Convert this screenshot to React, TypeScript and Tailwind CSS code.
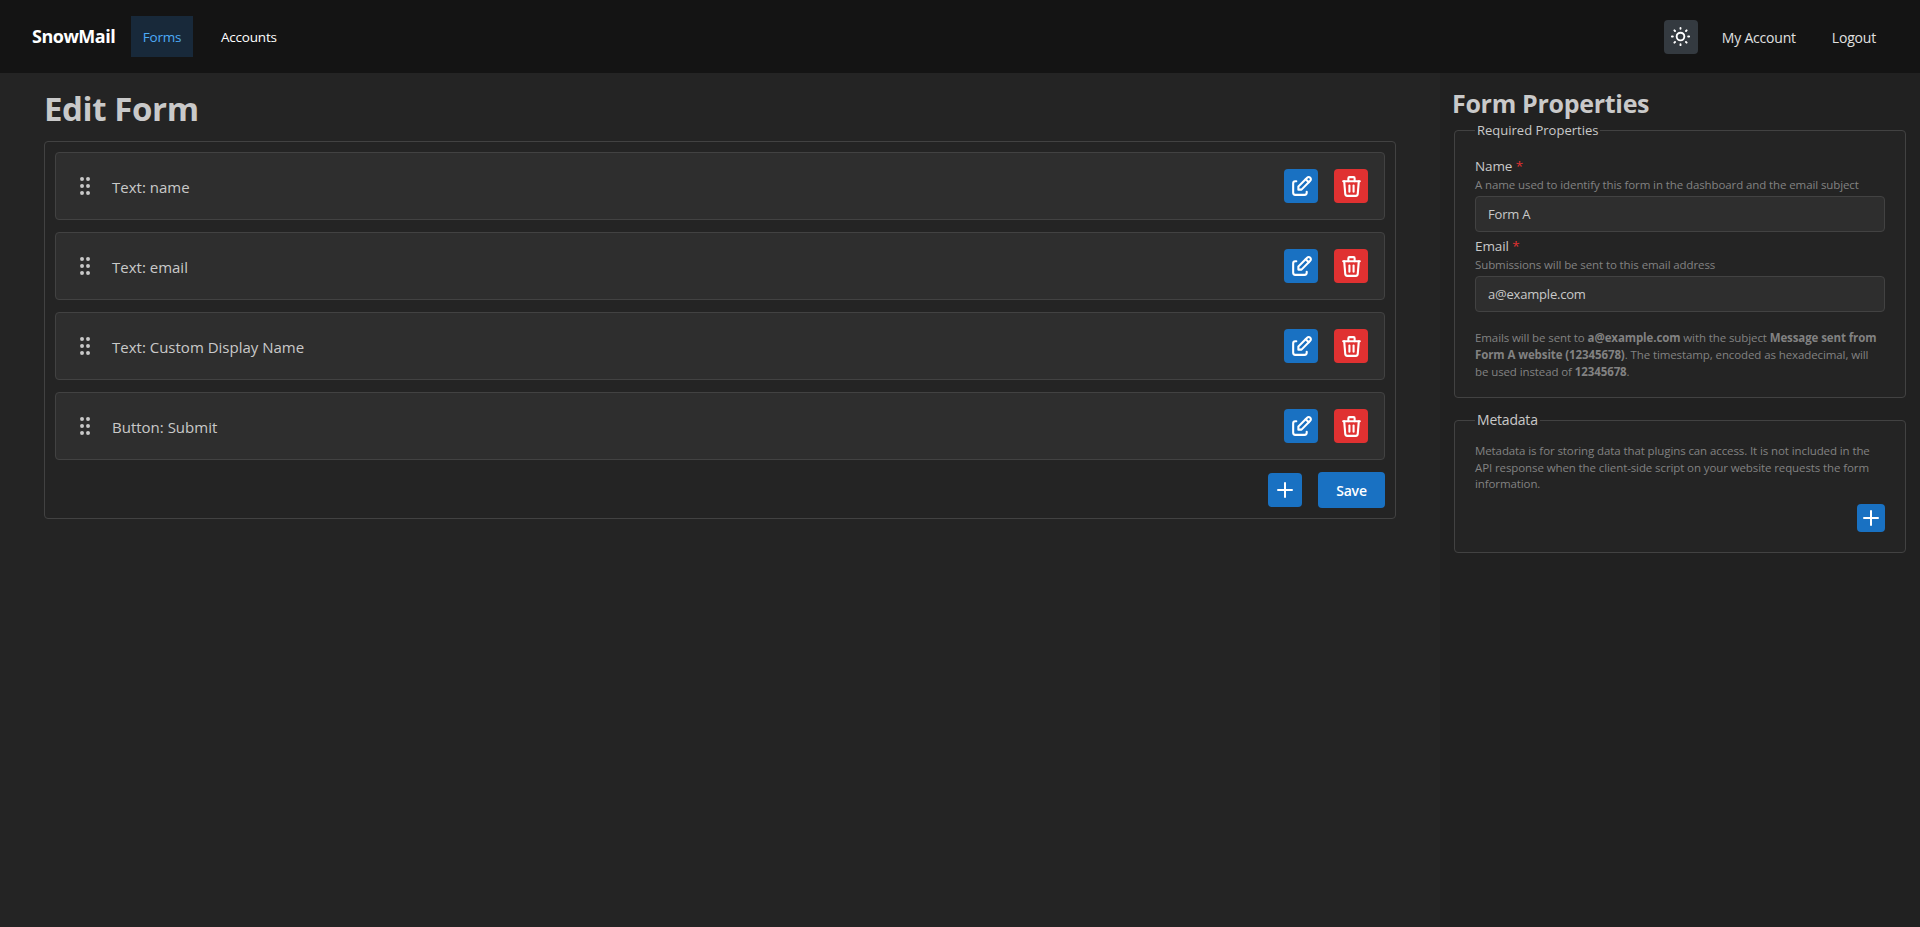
import React from 'react';
import { TbEdit, TbTrash, TbGripVertical, TbSun, TbPlus } from 'react-icons/tb';

const fields = ['Text: name', 'Text: email', 'Text: Custom Display Name', 'Button: Submit'];

const IconButton: React.FC<{ color?: string; size?: string; children: React.ReactNode }> = ({
  color = 'bg-[#1971c2]',
  size = 'w-[34px] h-[34px]',
  children,
}) => (
  <button className={`${color} ${size} rounded-[4px] flex items-center justify-center text-white shrink-0`}>
    {children}
  </button>
);

const FieldRow: React.FC<{ label: string }> = ({ label }) => (
  <div className="h-[68px] flex items-center pl-[17px] pr-[16px] bg-[#2e2e2e] border border-[#424242] rounded-[4px]">
    <TbGripVertical size={24} className="text-[#c9c9c9]" />
    <span className="ml-[15px] pt-[2px] text-[15px] text-[#c9c9c9]">{label}</span>
    <div className="ml-auto flex gap-[16px]">
      <IconButton>
        <TbEdit size={25} />
      </IconButton>
      <IconButton color="bg-[#e03131]">
        <TbTrash size={25} />
      </IconButton>
    </div>
  </div>
);

const Field: React.FC<{ label: string; hint: string; value: string }> = ({ label, hint, value }) => (
  <div>
    <div className="text-[13.5px] leading-[20px] tracking-[-0.1px] text-[#c9c9c9]">
      {label} <span className="text-[#e03131]">*</span>
    </div>
    <div className="text-[11.5px] leading-[15px] tracking-[-0.1px] text-[#828282] mt-[1px] mb-[4px]">{hint}</div>
    <input
      readOnly
      value={value}
      className="w-full h-[36px] px-[12px] bg-[#2e2e2e] border border-[#424242] rounded-[4px] text-[13px] text-[#c9c9c9] tracking-[-0.2px] outline-none"
    />
  </div>
);

const App: React.FC = () => {
  return (
    <div className="min-h-[927px] flex flex-col bg-[#242424] font-['Open_Sans','Liberation_Sans',sans-serif]">
      <header className="h-[73px] bg-[#141414] flex items-center px-[32px] text-[14px] tracking-[-0.2px]">
        <span className="w-[83px] mr-[16px] text-[18px] font-bold text-white tracking-[-0.5px]">SnowMail</span>
        <a className="h-[41px] w-[62px] pt-[2px] flex items-center justify-center bg-[#18293a] text-[#4dabf7] text-[13.5px]">
          Forms
        </a>
        <a className="h-[41px] ml-[16px] px-[12px] pt-[2px] flex items-center text-white text-[13.5px]">Accounts</a>
        <div className="ml-auto flex items-center">
          <button className="w-[34px] h-[34px] mr-[12px] rounded-[4px] bg-[#343a40] flex items-center justify-center text-white">
            <TbSun size={23} />
          </button>
          <a className="px-[12px] pt-[1px] text-[#e0e0e0]">My Account</a>
          <a className="ml-[12px] px-[12px] pt-[1px] text-[#e0e0e0]">Logout</a>
        </div>
      </header>

      <main className="flex flex-1">
        <section className="w-[1440px] pl-[44px] pr-[44px]">
          <h1 className="h-[68px] pt-[3px] flex items-center text-[33px] font-bold tracking-[-0.4px] text-[#c9c9c9]">Edit Form</h1>
          <div className="border border-[#424242] rounded-[4px] p-[10px] flex flex-col gap-[12px]">
            {fields.map(label => (
              <FieldRow key={label} label={label} />
            ))}
            <div className="flex justify-end items-center gap-[16px]">
              <IconButton>
                <TbPlus size={24} />
              </IconButton>
              <button className="h-[36px] w-[67px] pt-[1px] rounded-[4px] bg-[#1971c2] text-white text-[14px] font-semibold tracking-[-0.2px]">
                Save
              </button>
            </div>
          </div>
        </section>

        <aside className="w-[480px] pl-[14px] pr-[14px] bg-[#212121]">
          <h2 className="h-[50px] pt-[12px] -ml-[2px] flex items-center text-[25px] font-bold tracking-[-0.3px] text-[#c9c9c9]">
            Form Properties
          </h2>
          <fieldset className="border border-[#424242] rounded-[4px] bg-[#242424] px-[20px] pb-[17px] pt-[8px]">
            <legend className="px-[2px] text-[13px] leading-[14px] text-[#c9c9c9]">Required Properties</legend>
            <div className="flex flex-col gap-[4px] mt-[11px]">
              <Field
                label="Name"
                hint="A name used to identify this form in the dashboard and the email subject"
                value="Form A"
              />
              <Field label="Email" hint="Submissions will be sent to this email address" value="a@example.com" />
            </div>
            <p className="mt-[17px] pr-[4px] text-[11.5px] leading-[17px] tracking-[-0.1px] text-[#828282]">
              Emails will be sent to <b>a@example.com</b> with the subject <b>Message sent from Form A website (12345678)</b>. The
              timestamp, encoded as hexadecimal, will be used instead of <b>12345678</b>.
            </p>
          </fieldset>

          <fieldset className="mt-[15px] border border-[#424242] rounded-[4px] bg-[#242424] px-[20px] pb-[20px] pt-[16px]">
            <legend className="px-[2px] text-[14px] leading-[14px] tracking-[-0.2px] text-[#c9c9c9]">Metadata</legend>
            <p className="text-[11.5px] leading-[16.5px] tracking-[-0.1px] text-[#828282]">
              Metadata is for storing data that plugins can access. It is not included in the API response when the
              client-side script on your website requests the form information.
            </p>
            <div className="flex justify-end mt-[11px]">
              <IconButton size="w-[28px] h-[28px]">
                <TbPlus size={24} />
              </IconButton>
            </div>
          </fieldset>
        </aside>
      </main>
    </div>
  );
};

export default App;
